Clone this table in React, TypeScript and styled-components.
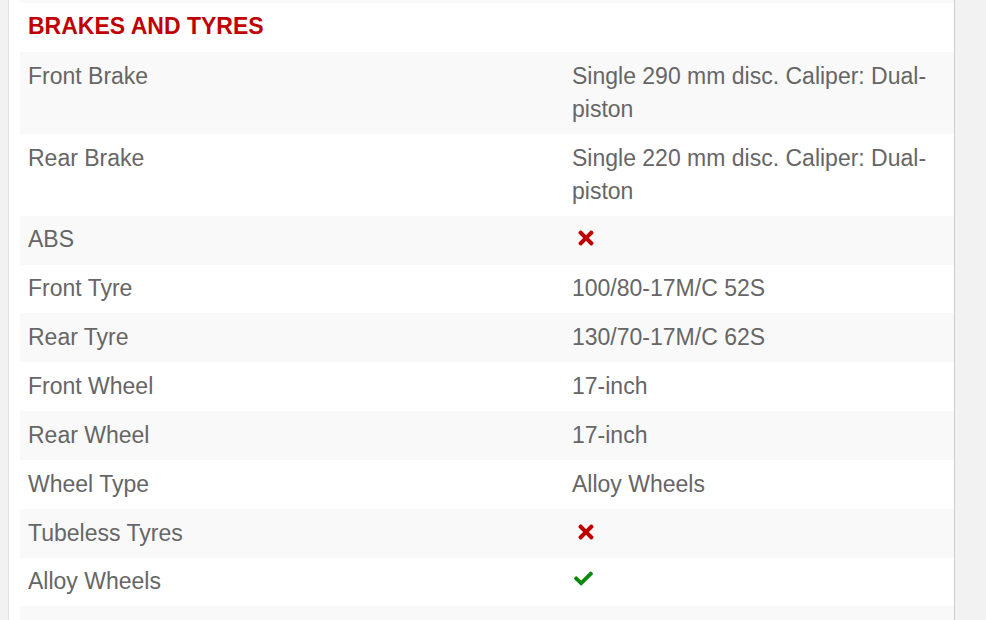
import React from "react";
import styled, { createGlobalStyle } from "styled-components";
import { FaTimes, FaCheck } from "react-icons/fa";

const Global = createGlobalStyle`
  html, body { margin: 0; padding: 0; background: #f2f2f2; }
  body { font-family: "Liberation Sans", Arial, sans-serif; }
`;

const Page = styled.div`
  padding-left: 8px;
  height: 620px;
  overflow: hidden;
`;

const Card = styled.div`
  width: 934px;
  background: #ffffff;
  border-left: 1px solid #e2e2e2;
  border-right: 1px solid #cccccc;
  padding-left: 11px;
  min-height: 620px;
`;

const PrevTail = styled.div`
  height: 3px;
  background: #f9f9f9;
`;

const Heading = styled.h3`
  margin: 0;
  height: 49px;
  display: flex;
  align-items: center;
  padding-left: 8px;
  padding-bottom: 3px;
  box-sizing: border-box;
  font-size: 23px;
  font-weight: bold;
  color: #c00000;
`;

const Table = styled.table`
  width: 934px;
  border-collapse: collapse;
  table-layout: fixed;
`;

const Row = styled.tr<{ $striped: boolean }>`
  background: ${(p) => (p.$striped ? "#f9f9f9" : "#ffffff")};
`;

const Cell = styled.td`
  box-sizing: border-box;
  padding: 7.75px 8px 8.1px 8px;
  font-size: 23px;
  line-height: 33px;
  height: 48.85px;
  color: #666666;
  vertical-align: top;
`;

const IconWrap = styled.span<{ $ok: boolean }>`
  display: inline-flex;
  align-items: center;
  vertical-align: top;
  height: 33px;
  padding-left: ${(p) => (p.$ok ? "2px" : "3px")};
  color: ${(p) => (p.$ok ? "#0a8a0a" : "#c00000")};
  font-size: ${(p) => (p.$ok ? "19px" : "22px")};
  position: relative;
  top: ${(p) => (p.$ok ? "-3px" : "-1.5px")};
`;

type Val = string | boolean;

const rows: [string, Val][] = [
  ["Front Brake", "Single 290 mm disc. Caliper: Dual-piston"],
  ["Rear Brake", "Single 220 mm disc. Caliper: Dual-piston"],
  ["ABS", false],
  ["Front Tyre", "100/80-17M/C 52S"],
  ["Rear Tyre", "130/70-17M/C 62S"],
  ["Front Wheel", "17-inch"],
  ["Rear Wheel", "17-inch"],
  ["Wheel Type", "Alloy Wheels"],
  ["Tubeless Tyres", false],
  ["Alloy Wheels", true],
];

export default function App() {
  return (
    <>
      <Global />
      <Page>
        <Card>
          <PrevTail />
          <Heading>BRAKES AND TYRES</Heading>
          <Table>
            <colgroup>
              <col style={{ width: 544 }} />
              <col />
            </colgroup>
            <tbody>
              {rows.map(([label, val], i) => (
                <Row key={label} $striped={i % 2 === 0}>
                  <Cell>{label}</Cell>
                  <Cell>
                    {typeof val === "string" ? (
                      val
                    ) : (
                      <IconWrap $ok={val}>{val ? <FaCheck /> : <FaTimes />}</IconWrap>
                    )}
                  </Cell>
                </Row>
              ))}
              <Row $striped={true}>
                <Cell colSpan={2} />
              </Row>
            </tbody>
          </Table>
        </Card>
      </Page>
    </>
  );
}
